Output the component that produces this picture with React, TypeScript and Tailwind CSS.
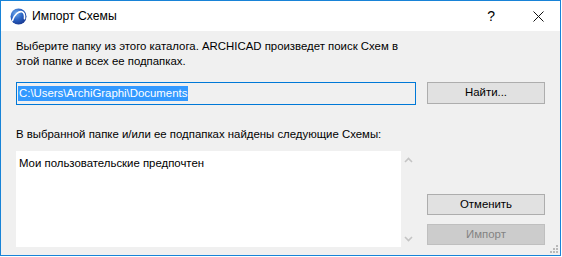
import React from "react";

const font = { fontFamily: '"Liberation Sans", "Noto Sans", Arial, sans-serif' };

function Logo() {
  return (
    <svg width="17" height="17" viewBox="0 0 17 17">
      <defs>
        <radialGradient id="g" cx="0.35" cy="0.3" r="0.8">
          <stop offset="0" stopColor="#6fa8e8" />
          <stop offset="0.5" stopColor="#2a63c4" />
          <stop offset="1" stopColor="#16338a" />
        </radialGradient>
      </defs>
      <circle cx="8.5" cy="8.5" r="8" fill="url(#g)" />
      <path d="M2.5 12.5 C4.5 6 9 3 12 3.8 C14.2 4.5 14.8 7.5 14.5 10.8" fill="none" stroke="#fff" strokeWidth="1.6" strokeLinecap="round" />
    </svg>
  );
}

function Chevron({ up }: { up?: boolean }) {
  return (
    <svg width="9" height="6" viewBox="0 0 9 6">
      <path d={up ? "M1 5 L4.5 1.5 L8 5" : "M1 1 L4.5 4.5 L8 1"} fill="none" stroke="#c4c4c4" strokeWidth="1.6" />
    </svg>
  );
}

export default function App() {
  return (
    <div className="w-[562px] h-[257px] bg-white" style={font}>
      <div className="w-[561px] h-[256px] border border-[#1883d7] flex flex-col relative">
        <div className="h-[30px] bg-white flex items-center shrink-0">
          <div className="ml-[9px] mt-[1px] flex items-center">
            <Logo />
          </div>
          <span className="ml-[5px] text-[12.2px] text-black">Импорт Схемы</span>
          <span className="ml-auto mr-[38px] text-[14px] text-black">?</span>
          <svg className="mr-[16px]" width="11" height="11" viewBox="0 0 11 11">
            <path d="M0.5 0.5 L10.5 10.5 M10.5 0.5 L0.5 10.5" stroke="#111" strokeWidth="1" />
          </svg>
        </div>
        <div className="flex-1 bg-[#f0f0f0] pl-[15px] text-[11.4px] text-black">
          <p className="mt-[8px] leading-[15px] w-[400px]">
            Выберите папку из этого каталога. ARCHICAD произведет поиск Схем в этой папке и всех ее подпапках.
          </p>
          <div className="mt-[13px] flex items-start">
            <div className="w-[400px] h-[23px] border border-[#0078d7] flex items-center pl-[1px]">
              <span className="bg-[#3399ff] text-white leading-[15px] px-[1px]">C:\Users\ArchiGraphi\Documents</span>
            </div>
            <button className="ml-[11px] w-[118px] h-[22px] border border-[#adadad] bg-[#e1e1e1] flex items-center justify-center text-black">
              Найти...
            </button>
          </div>
          <p className="mt-[22px] leading-[15px]">В выбранной папке и/или ее подпапках найдены следующие Схемы:</p>
          <div className="mt-[9px] flex items-start">
            <div className="w-[385px] h-[96px] bg-white pl-[3px] pt-[5px] leading-[15px]">
              Мои пользовательские предпочтен
            </div>
            <div className="w-[15px] h-[96px] flex flex-col items-center justify-between pt-[6px] pb-[5px]">
              <Chevron up />
              <Chevron />
            </div>
            <div className="ml-[11px] mt-[43px] flex flex-col gap-[9px]">
              <button className="w-[118px] h-[21px] border border-[#adadad] bg-[#e1e1e1] flex items-center justify-center text-black">
                Отменить
              </button>
              <button className="w-[118px] h-[21px] border border-[#bfbfbf] bg-[#cccccc] flex items-center justify-center text-[#838383]">
                Импорт
              </button>
            </div>
          </div>
        </div>
        <div className="absolute right-[2px] bottom-[2px] w-[8px] h-[8px]">
          <span className="absolute right-0 top-0 w-[2px] h-[2px] bg-[#b9b9b9]" />
          <span className="absolute right-0 top-[3px] w-[2px] h-[2px] bg-[#b9b9b9]" />
          <span className="absolute right-[3px] top-[3px] w-[2px] h-[2px] bg-[#b9b9b9]" />
          <span className="absolute right-0 top-[6px] w-[2px] h-[2px] bg-[#b9b9b9]" />
          <span className="absolute right-[3px] top-[6px] w-[2px] h-[2px] bg-[#b9b9b9]" />
          <span className="absolute right-[6px] top-[6px] w-[2px] h-[2px] bg-[#b9b9b9]" />
        </div>
      </div>
    </div>
  );
}
